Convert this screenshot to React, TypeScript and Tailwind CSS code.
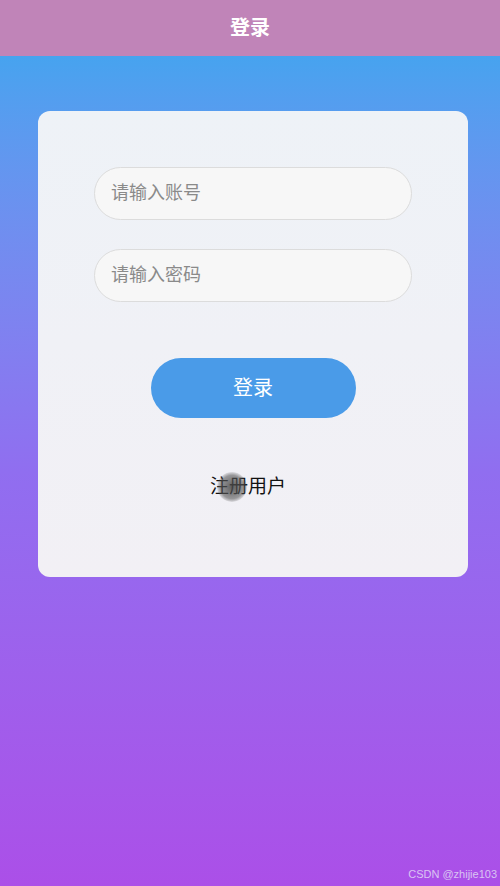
import { useState } from "react";

const FONT = { fontFamily: '"Liberation Sans", "Noto Sans CJK SC", sans-serif' };

const Login = () => {
  const [account, setAccount] = useState("");
  const [password, setPassword] = useState("");

  return (
    <div className="w-[500px] h-[886px] flex flex-col overflow-hidden" style={FONT}>
      {/* header */}
      <div className="h-[56px] shrink-0 bg-[#c084b8] flex items-center justify-center">
        <span className="text-white text-[20px] font-bold">登录</span>
      </div>

      {/* body */}
      <div className="relative flex-1 bg-gradient-to-b from-[#46a3ef] via-[#906ef0] to-[#ab4fe8] pl-[38px] pr-[32px] pt-[55px]">
        <div className="rounded-[12px] bg-gradient-to-b from-[#eef2f7] to-[#f2f0f5] h-[466px] flex flex-col items-center pt-[56px]">
          <input
            value={account}
            onChange={(e) => setAccount(e.target.value)}
            placeholder="请输入账号"
            className="w-[318px] h-[53px] rounded-full border border-[#dcdcdc] bg-[#f7f7f7] px-[16px] text-[18px] text-[#333] placeholder:text-[#8a8a8a] outline-none"
          />
          <input
            type="password"
            value={password}
            onChange={(e) => setPassword(e.target.value)}
            placeholder="请输入密码"
            className="mt-[29px] w-[318px] h-[53px] rounded-full border border-[#dcdcdc] bg-[#f7f7f7] px-[16px] text-[18px] text-[#333] placeholder:text-[#8a8a8a] outline-none"
          />
          <button className="mt-[56px] w-[205px] h-[60px] rounded-full bg-[#4a9be8] text-white text-[20px]">
            登录
          </button>
          <div className="relative mt-[55px] ml-[-10px] text-[19px] text-[#111]">
            注册用户
            {/* touch indicator */}
            <span className="absolute left-[7px] top-[-1px] w-[30px] h-[30px] rounded-full bg-[radial-gradient(circle,rgba(70,70,70,0.85)_0%,rgba(90,90,90,0.6)_55%,rgba(120,120,120,0)_75%)]" />
          </div>
        </div>

        <span className="absolute right-[3px] bottom-[4px] text-[11px] text-[#d9c4f2]">
          CSDN @zhijie103
        </span>
      </div>
    </div>
  );
};

export default function App() {
  return <Login />;
}
